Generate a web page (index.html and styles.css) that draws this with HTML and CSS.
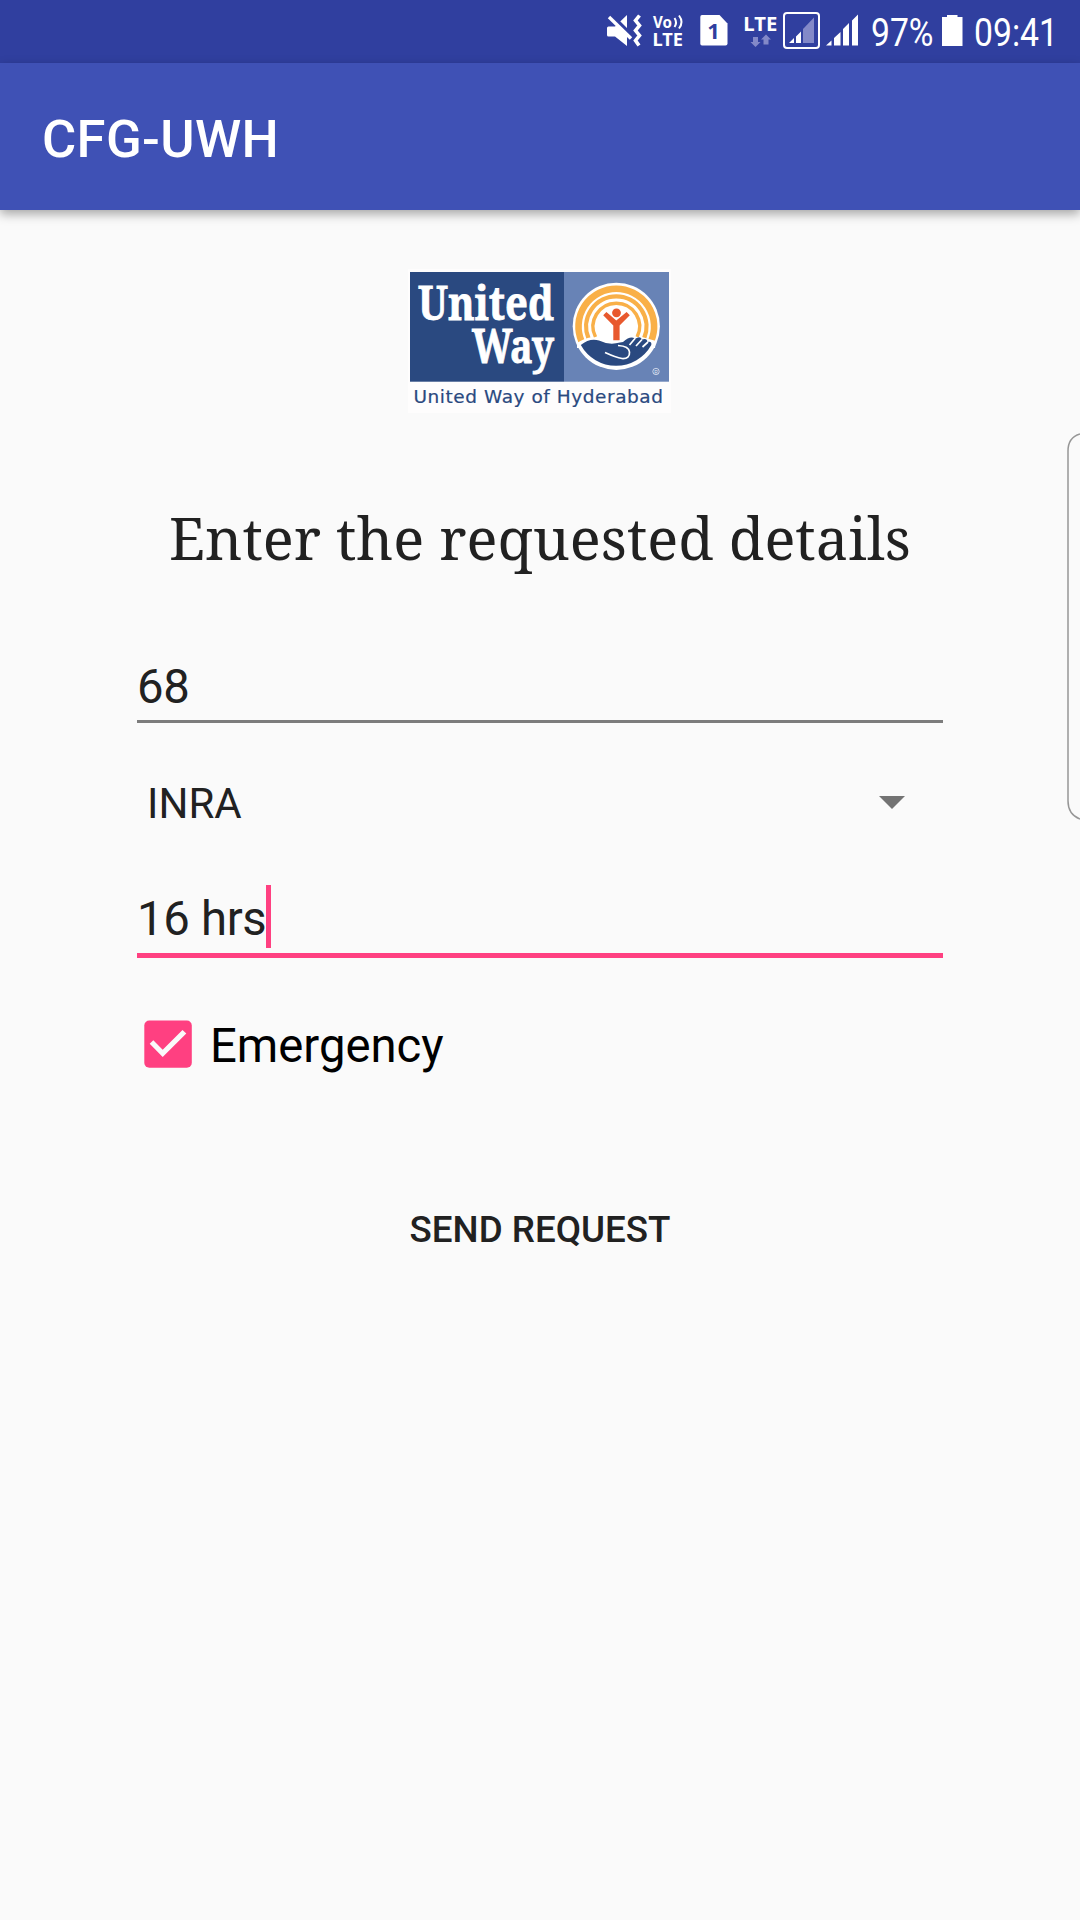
FILE: index.html
```html
<!DOCTYPE html>
<html lang="en">
<head>
<meta charset="utf-8">
<title>CFG-UWH</title>
<link rel="stylesheet" href="styles.css">
</head>
<body>
<div class="screen">
  <div class="status-bar">
    <svg class="status-icon" width="48" height="63" viewBox="600 0 48 63">
      <path d="M607 28q0-1.500 1.500-1.500H615L627 15V46L615 36.500H608.500Q607 36.500 607 35Z" fill="#fff"/>
      <path d="M611 16L633 38" stroke="#303f9f" stroke-width="5.500"/>
      <path d="M609 17L631 38.500" stroke="#fff" stroke-width="3.400"/>
      <path d="M639.500 15.500L635.500 20.500L639.500 25.500L635.500 30.500L639.500 35.500L635.500 40.500L639 45.500" fill="none" stroke="#fff" stroke-width="3.600"/>
    </svg>
    <svg class="status-icon" width="44" height="63" viewBox="648 0 44 63">
      <text class="tiny" x="653" y="28.300" font-size="16" textLength="19" lengthAdjust="spacingAndGlyphs">Vo</text>
      <path d="M674.500 18q3 4.500 0 9M679 15.500q5 6.500 0 13" fill="none" stroke="#fff" stroke-width="2"/>
      <text class="tiny" x="652.500" y="45.800" font-size="17.500" textLength="30.500" lengthAdjust="spacingAndGlyphs">LTE</text>
    </svg>
    <svg class="status-icon" width="44" height="63" viewBox="692 0 44 63">
      <path d="M702 15H719.500L727.500 23.500V43.500Q727.500 45.500 725.500 45.500H702Q700.300 45.500 700.300 43.500V17Q700.300 15 702 15Z" fill="#fff"/>
      <text class="sim" x="707.300" y="38.800" font-size="22">1</text>
    </svg>
    <svg class="status-icon" width="44" height="63" viewBox="736 0 44 63">
      <text class="tiny" x="743.300" y="30.500" font-size="20" textLength="34" lengthAdjust="spacingAndGlyphs">LTE</text>
      <path d="M753 37H758V42H760.500L755.500 47L750.500 42H753ZM763.500 44.500H768.500V39.500H771L766 34.500L761 39.500H763.500Z" fill="#8389c8"/>
    </svg>
    <svg class="status-icon" width="44" height="63" viewBox="780 0 44 63">
      <rect x="784" y="13" width="35" height="35" rx="3" fill="none" stroke="#fff" stroke-width="2"/>
      <path d="M803 43V29L814 17.500V43Z" fill="#8389c8"/>
      <path d="M789 43L794 38V43ZM796 43V36.500L801 31.500V43Z" fill="#fff"/>
    </svg>
    <svg class="status-icon" width="42" height="63" viewBox="824 0 42 63">
      <path d="M826 45.500L831.500 40.500V45.500ZM834 45.500V38L840.500 32V45.500ZM843 45.500V29L849 23V45.500ZM852 45.500V20.500L858 14.500V45.500Z" fill="#fff"/>
    </svg>
    <svg class="status-icon" width="72" height="63" viewBox="866 0 72 63">
      <text class="clock" x="871" y="45.500" textLength="62.500" lengthAdjust="spacingAndGlyphs">97%</text>
    </svg>
    <svg class="status-icon" width="30" height="63" viewBox="938 0 30 63">
      <path d="M942 17H947V15H957.500V17H962.500V46H942Z" fill="#fff"/>
    </svg>
    <svg class="status-icon" width="112" height="63" viewBox="968 0 112 63">
      <text class="clock" x="974" y="45.500" textLength="84" lengthAdjust="spacingAndGlyphs">09:41</text>
    </svg>
  </div>

  <header class="app-bar"><h1 class="app-title">CFG-UWH</h1></header>

  <main class="content">
    <svg class="logo" width="264" height="145" viewBox="408 269 264 145">
      <rect x="408" y="269" width="263" height="144" fill="#fefdfd"/>
      <rect x="410" y="272" width="154" height="109.700" fill="#2a4980"/>
      <rect x="564" y="272" width="105" height="109.700" fill="#6883b6"/>
      <text class="brand" x="418" y="320.300" textLength="136" lengthAdjust="spacingAndGlyphs">United</text>
      <text class="brand" x="472" y="362.700" textLength="82" lengthAdjust="spacingAndGlyphs">Way</text>
      <text class="brand-sub" x="413.500" y="403.300" textLength="249.500" lengthAdjust="spacing">United Way of Hyderabad</text>
      <circle cx="616.300" cy="326.300" r="43.600" fill="#fff"/>
      <g fill="none" stroke="#f9b048">
        <path d="M581.500 341.300A37.800 37.800 0 1 1 651.100 341.300" stroke-width="6.600"/>
        <path d="M588.500 338.300A30.200 30.200 0 1 1 644.100 338.300" stroke-width="4.300"/>
        <path d="M595.500 337A23.300 23.300 0 1 1 637.100 337" stroke-width="3.500"/>
      </g>
      <circle cx="616.500" cy="312.800" r="4.400" fill="#e8592e"/>
      <path d="M603.200 315.300L606.400 311.900L616.300 320.500L626.600 311.900L629.800 315.300L619.600 325.500V340.300H613.300V325.500Z" fill="#e8592e"/>
      <path d="M577 343Q588 335 600 338.500Q609 343 621 340.500Q627 338 631 335.500L636 337L642 337L656 341L655 348L577 348Z" fill="#fff"/>
      <path d="M580.800 345Q590 337.500 599 340.500Q609 345.500 620 342.500L623 342Q631 335 635 339Q640 335.500 642 339.500Q647 337.500 647.500 342Q652 341 651.300 345A40.300 40.300 0 0 1 580.800 345Z" fill="#2a4980"/>
      <path d="M605 352.500Q616 357.500 622 358.500Q630 359 629.500 352Q629 346 618 345.500M629.500 345L635 338.500M636 346L642 339.500M642.500 347L648 342" fill="none" stroke="#fff" stroke-width="1.700"/>
      <circle cx="656" cy="371.500" r="3.200" fill="none" stroke="#dfe6f2" stroke-width=".8"/>
      <text class="mark" x="654.200" y="373.500">R</text>
    </svg>

    <h2 class="heading">Enter the requested details</h2>

    <form class="form">
      <div class="field field-number">68</div>
      <div class="select">
        <span>INRA</span>
        <svg class="arrow" width="26" height="13" viewBox="0 0 26 13"><path d="M0 0H26L13 13Z" fill="#737373"/></svg>
      </div>
      <div class="field field-active"><span class="value">16 hrs</span><i class="caret"></i></div>
      <div class="check-row">
        <svg width="48" height="48" viewBox="0 0 48 48"><rect x=".3" y=".5" width="47.500" height="47.300" rx="5" fill="#ff4081"/><path d="M5.700 23.700L18.700 37L42.300 13.500L38.500 10L18.700 29.700L9.300 20.300Z" fill="#fafafa"/></svg>
        <span class="check-label">Emergency</span>
      </div>
      <div class="send">SEND REQUEST</div>
    </form>
  </main>

  <svg class="edge-handle" width="14" height="388" viewBox="0 0 14 388"><path d="M14 2Q2 5.500 2 19V369Q2 382.500 14 387" fill="none" stroke="#969696" stroke-width="1.500"/></svg>
</div>
</body>
</html>
```
FILE: styles.css
```css
* { box-sizing: border-box; }

body {
  margin: 0;
  background: #fafafa;
  font-family: Roboto, "Liberation Sans", sans-serif;
}

.screen {
  position: relative;
  display: flex;
  flex-direction: column;
  width: 1080px;
  height: 1920px;
  overflow: hidden;
  background: #fafafa;
  color: #212121;
}

.status-bar {
  display: flex;
  justify-content: flex-end;
  height: 63px;
  background: #303f9f;
}

.status-icon { display: block; flex: none; overflow: visible; }

.tiny { font-family: "Noto Sans", sans-serif; font-weight: 700; fill: #fff; }
.sim { font-family: "Noto Sans", sans-serif; font-weight: 700; fill: #303f9f; }
.clock { font-family: Roboto, sans-serif; font-size: 38px; fill: #fff; }

.app-bar {
  display: flex;
  align-items: center;
  height: 147px;
  padding: 4px 42px 0;
  background: #3f51b5;
  box-shadow: 0 4px 10px rgba(0, 0, 0, .34);
}

.app-title {
  margin: 0;
  color: #fff;
  font-size: 52.5px;
  font-weight: 500;
  letter-spacing: .35px;
  line-height: 62px;
}

.content {
  display: flex;
  flex-direction: column;
  align-items: center;
  padding-top: 59px;
}

.logo { display: block; overflow: visible; }

.brand {
  font-family: "Noto Serif", "DejaVu Serif Condensed", serif;
  font-size: 47.500px;
  font-weight: 700;
  fill: #fff;
  stroke: #fff;
  stroke-width: .8px;
}

.brand-sub {
  font-family: "DejaVu Sans", sans-serif;
  font-size: 18.500px;
  fill: #2a4980;
  stroke: #2a4980;
  stroke-width: .2px;
}

.mark { font-family: "Liberation Sans", sans-serif; font-size: 5px; fill: #dfe6f2; }

.heading {
  margin: 84px 0 2px;
  font-family: "Noto Serif", "DejaVu Serif Condensed", serif;
  font-size: 57.750px;
  font-weight: 400;
  letter-spacing: .07px;
  line-height: 80px;
  white-space: nowrap;
}

.form {
  display: flex;
  flex-direction: column;
  width: 806px;
  margin-top: 75px;
}

.field {
  display: flex;
  align-items: center;
  height: 68px;
  font-size: 47.250px;
  line-height: 64px;
}

.field-number {
  padding-bottom: 2px;
  border-bottom: 3px solid #7c7c7c;
  letter-spacing: -.3px;
}

.select {
  display: flex;
  align-items: center;
  justify-content: space-between;
  height: 60px;
  margin-top: 50px;
  padding: 0 38.500px 0 10px;
  font-size: 42px;
}

.arrow { margin-bottom: 2px; }

.field-active {
  height: 73px;
  margin-top: 52px;
  padding-bottom: 6px;
  border-bottom: 5px solid #ff4081;
}

.value { padding-top: 6px; letter-spacing: -.3px; }

.caret { width: 5px; height: 63px; background: #ff4081; }

.check-row {
  display: flex;
  align-items: center;
  gap: 18px;
  height: 60px;
  margin-top: 56px;
  padding-left: 7px;
  color: #000;
  font-size: 47.250px;
}

.check-label { padding-top: 4px; }

.send {
  margin-top: 126px;
  font-size: 36.750px;
  font-weight: 500;
  line-height: 60px;
  text-align: center;
}

.edge-handle { position: absolute; right: 0; top: 432px; }
```
